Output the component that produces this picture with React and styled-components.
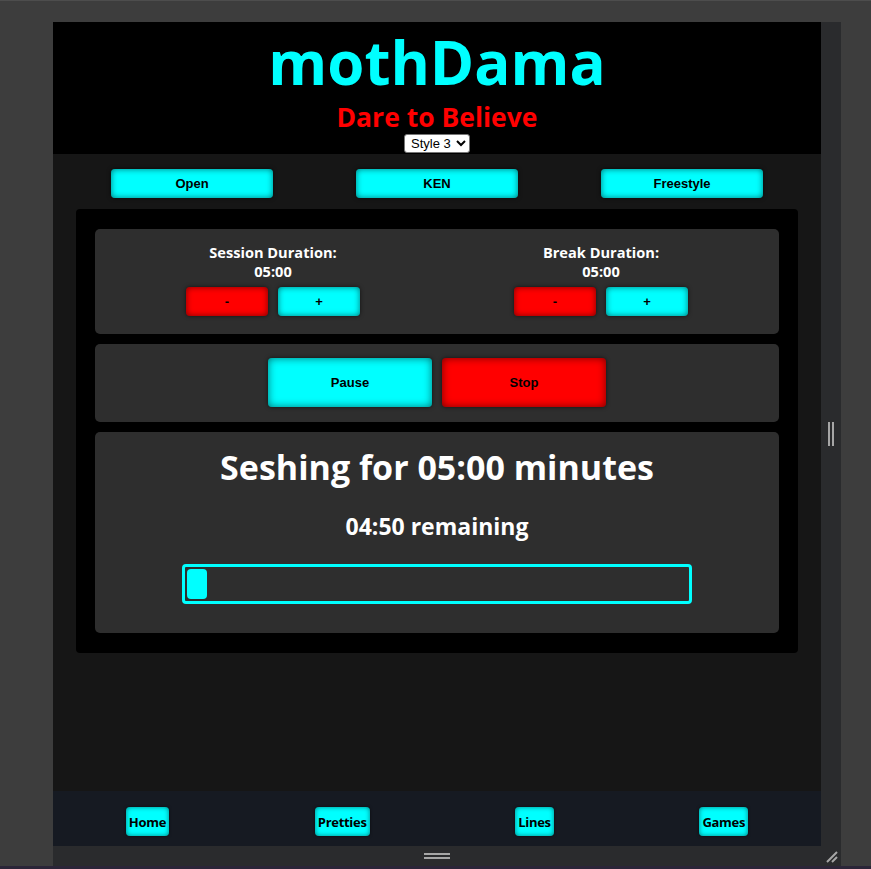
import React, { useState } from "react";
import styled, { createGlobalStyle } from "styled-components";

const GlobalStyle = createGlobalStyle`
  html, body {
    margin: 0;
    padding: 0;
    background: #3d3d3d;
  }
  body {
    font-family: "Open Sans", "DejaVu Sans", sans-serif;
  }
`;

const Screen = styled.div`
  width: 871px;
  height: 869px;
  box-sizing: border-box;
  background: #3d3d3d;
  border-top: 1px solid #4d4d4d;
  border-bottom: 3px solid #2b2538;
  padding: 21px 0 0 53px;
  overflow: hidden;
`;

const Frame = styled.div`
  display: grid;
  grid-template-columns: 768px 20px;
  grid-template-rows: 824px 20px;
  width: 788px;
  background: #2a2b2d;
`;

const SideHandle = styled.div`
  display: flex;
  align-items: center;
  justify-content: center;
  gap: 2px;
  span {
    width: 2px;
    height: 24px;
    background: #a6a6a6;
  }
`;

const BottomHandle = styled.div`
  display: flex;
  flex-direction: column;
  align-items: center;
  justify-content: center;
  gap: 2px;
  span {
    width: 26px;
    height: 2px;
    background: #a6a6a6;
  }
`;

const Corner = styled.div`
  display: flex;
  align-items: center;
  justify-content: center;
`;

const Preview = styled.div`
  display: flex;
  flex-direction: column;
  background: #161616;
  overflow: hidden;
`;

const Header = styled.header`
  background: #000;
  height: 132px;
  display: flex;
  flex-direction: column;
  align-items: center;
`;

const Title = styled.h1`
  margin: 10px 0 0;
  font-size: 60px;
  line-height: 60px;
  font-weight: 700;
  color: #00ffff;
`;

const Tagline = styled.h2`
  margin: 11px 0 0;
  font-size: 26.5px;
  line-height: 28px;
  font-weight: 700;
  color: #ff0000;
`;

const StyleSelect = styled.select`
  margin-top: 3px;
  height: 19px;
  padding: 0 2px;
  font-family: "Liberation Sans", Arial, sans-serif;
  font-size: 13px;
  background: #fff;
  color: #000;
  border: 1px solid #767676;
  border-radius: 3px;
`;

const ModeRow = styled.nav`
  display: flex;
  justify-content: space-between;
  padding: 15px 58px 11px;
`;

const GlowButton = styled.button`
  width: ${(p) => p.$w || 162}px;
  height: ${(p) => p.$h || 29}px;
  border: none;
  border-radius: 4px;
  background: ${(p) => (p.$red ? "#ff0000" : "#00ffff")};
  color: #000;
  font-family: "Liberation Sans", Arial, sans-serif;
  font-size: 13px;
  font-weight: 700;
  cursor: pointer;
  box-shadow: inset 0 0 ${(p) => (p.$big ? 9 : 6)}px rgba(0, 0, 0, 0.55),
    0 0 4px rgba(0, 0, 0, 0.6);
`;

const Main = styled.main`
  flex: 1;
`;

const Panel = styled.section`
  margin: 0 23px;
  background: #000;
  border-radius: 4px;
  padding: 20px 19px 20px;
  display: flex;
  flex-direction: column;
  gap: 10px;
`;

const Card = styled.div`
  background: #2e2e2e;
  border-radius: 5px;
  padding: ${(p) => p.$pad || "0"};
  display: flex;
  flex-direction: ${(p) => (p.$column ? "column" : "row")};
  align-items: center;
  justify-content: ${(p) => p.$justify || "center"};
  gap: ${(p) => p.$gap || 0}px;
`;

const Setting = styled.div`
  display: flex;
  flex-direction: column;
  align-items: center;
  color: #fff;
  font-size: 14.6px;
  font-weight: 700;
  line-height: 19px;
`;

const StepRow = styled.div`
  display: flex;
  gap: 10px;
  margin-top: 6px;
`;

const Heading = styled.div`
  color: #fff;
  font-size: 34px;
  font-weight: 700;
  line-height: 40px;
`;

const Remaining = styled.div`
  color: #fff;
  font-size: 23px;
  font-weight: 700;
  line-height: 30px;
  margin-top: 24px;
`;

const Track = styled.div`
  margin-top: 23px;
  width: 510px;
  height: 40px;
  box-sizing: border-box;
  border: 3px solid #00ffff;
  border-radius: 4px;
  padding: 2px;
`;

const Fill = styled.div`
  height: 100%;
  background: #00ffff;
  border-radius: 4px;
`;

const Footer = styled.footer`
  height: 55px;
  box-sizing: border-box;
  padding-top: 6px;
  background: #161a22;
  display: flex;
  align-items: center;
  justify-content: space-around;
`;

const NavButton = styled.button`
  height: 29px;
  padding: 0 3px;
  border: none;
  border-radius: 4px;
  background: #00ffff;
  color: #000;
  font-family: "Open Sans", sans-serif;
  font-size: 13px;
  font-weight: 700;
  letter-spacing: -0.3px;
  box-shadow: inset 0 0 5px rgba(0, 0, 0, 0.5), 0 0 3px rgba(0, 0, 0, 0.6);
`;

export default function App() {
  const [style, setStyle] = useState("3");
  const total = 300;
  const left = 290;
  const pct = Math.max(((total - left) / total) * 100, 4);

  return (
    <>
      <GlobalStyle />
      <Screen>
        <Frame>
          <Preview>
            <Header>
              <Title>mothDama</Title>
              <Tagline>Dare to Believe</Tagline>
              <StyleSelect value={style} onChange={(e) => setStyle(e.target.value)}>
                <option value="1">Style 1</option>
                <option value="2">Style 2</option>
                <option value="3">Style 3</option>
              </StyleSelect>
            </Header>
            <Main>
              <ModeRow>
                <GlowButton>Open</GlowButton>
                <GlowButton>KEN</GlowButton>
                <GlowButton>Freestyle</GlowButton>
              </ModeRow>
              <Panel>
                <Card $pad="14px 91px 18px" $justify="space-between">
                  <Setting>
                    <span>Session Duration:</span>
                    <span>05:00</span>
                    <StepRow>
                      <GlowButton $w={82} $red>-</GlowButton>
                      <GlowButton $w={82}>+</GlowButton>
                    </StepRow>
                  </Setting>
                  <Setting>
                    <span>Break Duration:</span>
                    <span>05:00</span>
                    <StepRow>
                      <GlowButton $w={82} $red>-</GlowButton>
                      <GlowButton $w={82}>+</GlowButton>
                    </StepRow>
                  </Setting>
                </Card>
                <Card $pad="14px 0 15px" $gap={10}>
                  <GlowButton $w={164} $h={49} $big>Pause</GlowButton>
                  <GlowButton $w={164} $h={49} $big $red>Stop</GlowButton>
                </Card>
                <Card $column $pad="15px 0 29px">
                  <Heading>Seshing for 05:00 minutes</Heading>
                  <Remaining>04:50 remaining</Remaining>
                  <Track>
                    <Fill style={{ width: `${pct}%` }} />
                  </Track>
                </Card>
              </Panel>
            </Main>
            <Footer>
              <NavButton>Home</NavButton>
              <NavButton>Pretties</NavButton>
              <NavButton>Lines</NavButton>
              <NavButton>Games</NavButton>
            </Footer>
          </Preview>
          <SideHandle>
            <span />
            <span />
          </SideHandle>
          <BottomHandle>
            <span />
            <span />
          </BottomHandle>
          <Corner>
            <svg width="14" height="14" viewBox="0 0 14 14">
              <path d="M3 13 L13 3 M8 13 L13 8" stroke="#a6a6a6" strokeWidth="2" />
            </svg>
          </Corner>
        </Frame>
      </Screen>
    </>
  );
}
